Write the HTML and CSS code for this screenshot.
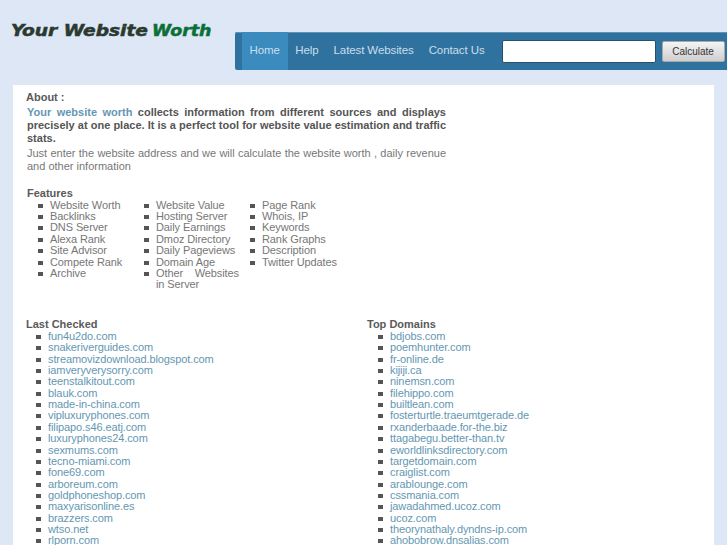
FILE: index.html
```html
<!DOCTYPE html>
<html lang="en">
<head>
  <meta charset="UTF-8">
  <title>Your Website Worth</title>
  <link rel="stylesheet" href="styles.css">
</head>
<body>
<div class="header">
  <a class="logo" href="#"><span class="logo-dark">Your Website</span><span class="logo-green">Worth</span></a>
  <div class="navbar">
    <ul class="nav">
      <li class="active"><a href="#">Home</a></li>
      <li><a href="#">Help</a></li>
      <li><a href="#">Latest Websites</a></li>
      <li><a href="#">Contact Us</a></li>
    </ul>
    <form class="search-form">
      <input type="text" class="search-input">
      <button type="button" class="search-button">Calculate</button>
    </form>
  </div>
</div>
<div class="container">
  <div class="about">
    <h4>About :</h4>
    <p class="lead"><a href="#">Your website worth</a> collects information from different sources and displays precisely at one place. It is a perfect tool for website value estimation and traffic stats.</p>
    <p class="intro">Just enter the website address and we will calculate the website worth , daily revenue and other information</p>
  </div>
  <div class="features">
    <h4>Features</h4>
    <div class="feature-columns">
      <ul class="bullets col-first">
        <li>Website Worth</li>
        <li>Backlinks</li>
        <li>DNS Server</li>
        <li>Alexa Rank</li>
        <li>Site Advisor</li>
        <li>Compete Rank</li>
        <li>Archive</li>
      </ul>
      <ul class="bullets col-second">
        <li>Website Value</li>
        <li>Hosting Server</li>
        <li>Daily Earnings</li>
        <li>Dmoz Directory</li>
        <li>Daily Pageviews</li>
        <li>Domain Age</li>
        <li class="wrapped">Other Websites in Server</li>
      </ul>
      <ul class="bullets col-third">
        <li>Page Rank</li>
        <li>Whois, IP</li>
        <li>Keywords</li>
        <li>Rank Graphs</li>
        <li>Description</li>
        <li>Twitter Updates</li>
      </ul>
    </div>
  </div>
  <div class="lists">
    <div class="list-block">
      <h4>Last Checked</h4>
      <ul class="bullets">
        <li><a href="#">fun4u2do.com</a></li>
        <li><a href="#">snakeriverguides.com</a></li>
        <li><a href="#">streamovizdownload.blogspot.com</a></li>
        <li><a href="#">iamveryverysorry.com</a></li>
        <li><a href="#">teenstalkitout.com</a></li>
        <li><a href="#">blauk.com</a></li>
        <li><a href="#">made-in-china.com</a></li>
        <li><a href="#">vipluxuryphones.com</a></li>
        <li><a href="#">filipapo.s46.eatj.com</a></li>
        <li><a href="#">luxuryphones24.com</a></li>
        <li><a href="#">sexmums.com</a></li>
        <li><a href="#">tecno-miami.com</a></li>
        <li><a href="#">fone69.com</a></li>
        <li><a href="#">arboreum.com</a></li>
        <li><a href="#">goldphoneshop.com</a></li>
        <li><a href="#">maxyarisonline.es</a></li>
        <li><a href="#">brazzers.com</a></li>
        <li><a href="#">wtso.net</a></li>
        <li><a href="#">rlporn.com</a></li>
      </ul>
    </div>
    <div class="list-block">
      <h4>Top Domains</h4>
      <ul class="bullets">
        <li><a href="#">bdjobs.com</a></li>
        <li><a href="#">poemhunter.com</a></li>
        <li><a href="#">fr-online.de</a></li>
        <li><a href="#">kijiji.ca</a></li>
        <li><a href="#">ninemsn.com</a></li>
        <li><a href="#">filehippo.com</a></li>
        <li><a href="#">builtlean.com</a></li>
        <li><a href="#">fosterturtle.traeumtgerade.de</a></li>
        <li><a href="#">rxanderbaade.for-the.biz</a></li>
        <li><a href="#">ttagabegu.better-than.tv</a></li>
        <li><a href="#">eworldlinksdirectory.com</a></li>
        <li><a href="#">targetdomain.com</a></li>
        <li><a href="#">craiglist.com</a></li>
        <li><a href="#">arablounge.com</a></li>
        <li><a href="#">cssmania.com</a></li>
        <li><a href="#">jawadahmed.ucoz.com</a></li>
        <li><a href="#">ucoz.com</a></li>
        <li><a href="#">theorynathaly.dyndns-ip.com</a></li>
        <li><a href="#">ahobobrow.dnsalias.com</a></li>
      </ul>
    </div>
  </div>
</div>
</body>
</html>
```

FILE: styles.css
```css
html, body {
  height: 545px;
  overflow: hidden;
}

body {
  margin: 0;
  background-color: #dde7f5;
  font-family: "Liberation Sans", Arial, sans-serif;
  font-size: 11px;
  line-height: 11.36px;
  letter-spacing: -0.1px;
  color: #777;
}

a {
  color: #6497b3;
  text-decoration: none;
}

ul {
  margin: 0;
  padding: 0;
  list-style: none;
}

.bullets li {
  padding-left: 12px;
  background: linear-gradient(#555, #555) no-repeat 0 4px / 5px 4px;
}

h4 {
  margin: 0;
  font-size: 11px;
  font-weight: bold;
  letter-spacing: 0;
  color: #5a5a5a;
}

.header {
  display: flex;
  align-items: flex-start;
  height: 85px;
}

.logo {
  width: 235px;
  flex: none;
  padding: 23px 0 0 11px;
  box-sizing: border-box;
  font-family: "DejaVu Sans", sans-serif;
  font-size: 15px;
  line-height: 16px;
  font-weight: bold;
  font-style: italic;
  letter-spacing: 0;
  white-space: nowrap;
  -webkit-text-stroke: 0.5px currentColor;
}

.logo-dark,
.logo-green {
  display: inline-block;
  transform-origin: left center;
}

.logo-dark {
  width: 141px;
  color: #2b3a30;
  transform: scaleX(1.24);
}

.logo-green {
  color: #0b7038;
  transform: scaleX(1.16);
}

.navbar {
  display: flex;
  align-items: center;
  margin-top: 32px;
  width: 492px;
  height: 38px;
  padding-left: 7px;
  box-sizing: border-box;
  background-color: #2f729f;
  border-radius: 2px 0 0 2px;
  box-shadow: inset 0 1px 0 #5f93b5;
}

.nav {
  display: flex;
  height: 100%;
  flex: none;
}

.nav a {
  display: block;
  padding: 0 7.5px;
  font-size: 11.5px;
  line-height: 37px;
  letter-spacing: -0.1px;
  white-space: nowrap;
  color: #c9deeb;
}

.nav li.active a {
  height: 100%;
  padding-right: 8px;
  background-color: #3b8bbf;
}

.search-form {
  display: flex;
  align-items: center;
  margin-left: 10px;
}

.search-input {
  width: 154px;
  height: 23px;
  padding: 0;
  box-sizing: border-box;
  background-color: #fff;
  border: 1px solid #2a4f69;
  border-radius: 2px;
}

.search-button {
  width: 63px;
  height: 21px;
  margin-left: 5.5px;
  padding: 0;
  background: linear-gradient(#f4f4f4, #cfcfcf);
  border: 1px solid #a9a9a9;
  border-radius: 2px;
  font-family: "Liberation Sans", Arial, sans-serif;
  font-size: 10px;
  letter-spacing: 0;
  color: #333;
}

.container {
  width: 701px;
  height: 460px;
  margin-left: 13px;
  padding: 7px 13px 0;
  box-sizing: border-box;
  background-color: #fff;
}

.about {
  width: 420px;
}

.about p {
  margin: 0 0 0 1px;
  text-align: justify;
}

.about .lead {
  margin-top: 3px;
  font-weight: bold;
  line-height: 13px;
  letter-spacing: 0;
  color: #555;
}

.about .intro {
  margin-top: 2px;
  line-height: 13px;
  letter-spacing: 0;
}

.features {
  margin-top: 15px;
  margin-left: 1px;
}

.feature-columns {
  display: flex;
}

.col-first,
.col-second {
  flex: none;
  width: 106px;
  padding-left: 11px;
  box-sizing: border-box;
}

.col-third {
  flex: none;
  padding-left: 11px;
}

.wrapped {
  text-align: justify;
}

.lists {
  display: flex;
  margin-top: 28px;
}

.list-block {
  flex: none;
  width: 341px;
}

.list-block ul {
  padding-left: 10px;
  margin-top: 1px;
}

.list-block + .list-block ul {
  padding-left: 11px;
}
```
